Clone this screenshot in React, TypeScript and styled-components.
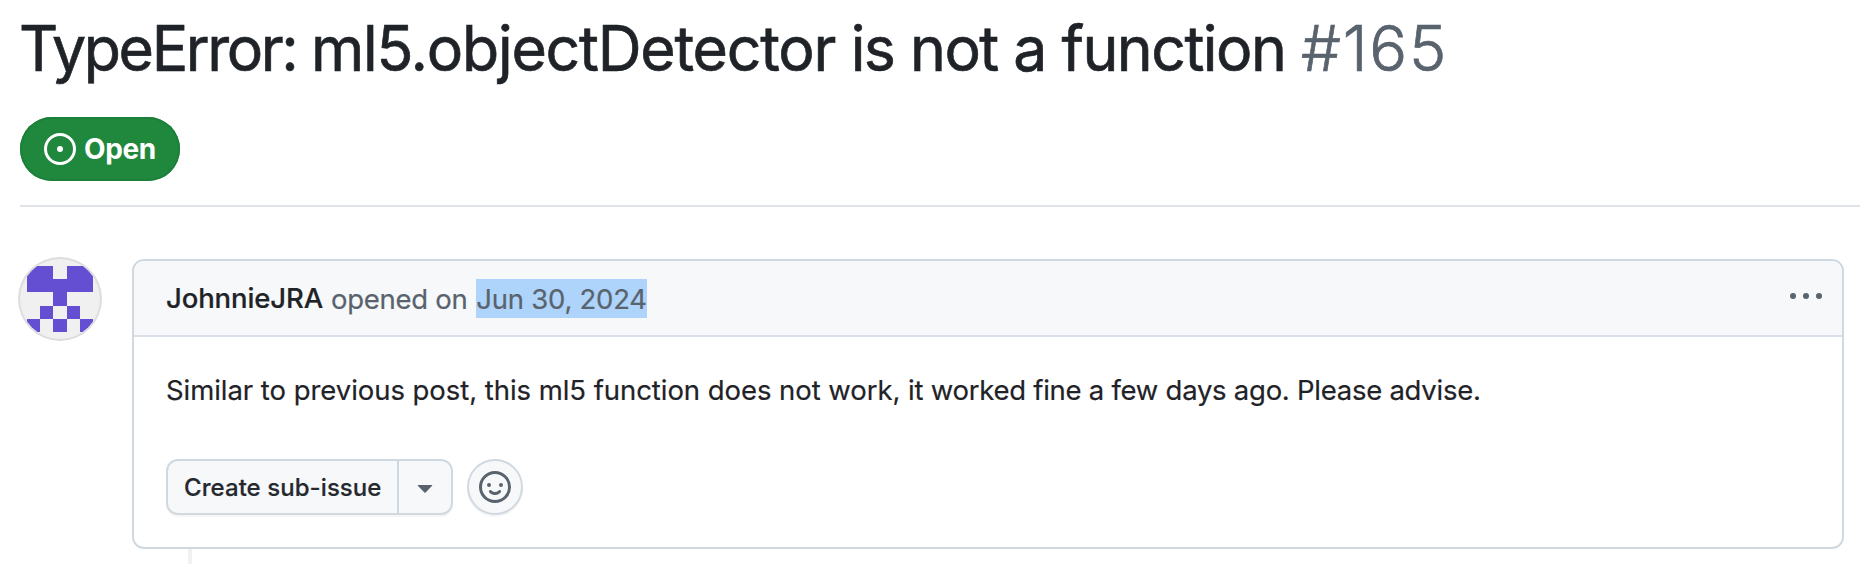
import React from "react";
import styled, { createGlobalStyle } from "styled-components";

const GlobalStyle = createGlobalStyle`
  *, *::before, *::after { box-sizing: border-box; }
  html, body { margin: 0; padding: 0; }
  body {
    background: #ffffff;
    color: #1f2328;
    font-family: Inter, "Liberation Sans", sans-serif;
    overflow: hidden;
    -webkit-font-smoothing: antialiased;
  }
  h1, p { margin: 0; }
  button { font-family: inherit; cursor: pointer; }
`;

const Page = styled.main`
  width: 1860px;
  height: 564px;
  display: flex;
  flex-direction: column;
  overflow: hidden;
`;

const IssueHeader = styled.header`
  display: flex;
  flex-direction: column;
  align-items: flex-start;
  gap: 29px;
  margin-left: 20px;
  padding: 8px 0 24px;
  height: 207px;
  flex: none;
  border-bottom: 2px solid #dfe3e8;
`;

const Title = styled.h1`
  margin-left: -1px;
  font-size: 63px;
  font-weight: 400;
  line-height: 80px;
  white-space: nowrap;
`;

const TitleText = styled.span`
  display: inline-block;
  margin-right: -48px;
  transform: scaleX(0.965);
  transform-origin: left center;
  -webkit-text-stroke: 0.7px currentColor;
`;

const Tracked = styled.span<{ $spacing: number }>`
  letter-spacing: ${(p) => p.$spacing}px;
`;

const IssueNumber = styled.span`
  color: #59636e;
  font-weight: 300;
  letter-spacing: 1.8px;
  -webkit-text-stroke: 0.7px currentColor;
`;

const StateBadge = styled.span`
  display: inline-flex;
  align-items: center;
  gap: 8px;
  width: 160px;
  height: 64px;
  padding-left: 24px;
  border-radius: 32px;
  background: #1f883d;
  box-shadow: inset 0 0 0 2px #1d803a;
  color: #ffffff;
  font-size: 28px;
  font-weight: 700;
  letter-spacing: -0.4px;
  white-space: nowrap;
`;

const Timeline = styled.section`
  display: flex;
  align-items: flex-start;
  gap: 32px;
  padding: 52px 16px 0 20px;
`;

const Avatar = styled.div`
  width: 80px;
  height: 80px;
  flex: none;
  border-radius: 50%;
  overflow: hidden;
  background: #f0f0f0;
  box-shadow: 0 0 0 2px #dddddf;
`;

const Thread = styled.div`
  flex: 1;
  min-width: 0;
`;

const Card = styled.article`
  height: 290px;
  border: 2px solid #d1d9e0;
  border-radius: 12px;
  background: #ffffff;
  overflow: hidden;
`;

const CardHeader = styled.div`
  display: flex;
  align-items: center;
  justify-content: space-between;
  height: 76px;
  padding: 0 20px 0 32px;
  border-bottom: 2px solid #dae0e7;
  background: #f6f8fa;
`;

const Byline = styled.div`
  display: flex;
  align-items: flex-start;
  padding-top: 2px;
  font-size: 27.5px;
  line-height: 39px;
  letter-spacing: -0.3px;
  color: #59636e;
  white-space: nowrap;
  -webkit-text-stroke: 0.2px currentColor;
`;

const Author = styled.span`
  color: #1f2328;
  font-weight: 500;
  line-height: 37px;
  letter-spacing: -0.12px;
  margin-right: 8px;
`;

const OpenedOn = styled.span`
  margin-right: 9px;
`;

const SelectedDate = styled.span`
  height: 39px;
  margin-top: -1px;
  line-height: 41px;
  background: #aed4fb;
  color: #59636e;
  letter-spacing: -0.25px;
`;

const KebabButton = styled.button`
  display: flex;
  padding: 0 0 4px;
  border: 0;
  background: none;
  color: #59636e;
`;

const CardBody = styled.div`
  padding: 32px 32px 0;
`;

const Message = styled.p`
  font-size: 27.5px;
  line-height: 42px;
  white-space: nowrap;
  -webkit-text-stroke: 0.2px currentColor;
`;

const Actions = styled.div`
  display: flex;
  gap: 14px;
  margin-top: 48px;
`;

const ButtonGroup = styled.div`
  display: flex;
  width: 287px;
  height: 56px;
  border: 2px solid #d1d9e0;
  border-radius: 12px;
  background: #f6f8fa;
  box-shadow: 0 2px 0 rgba(31, 35, 40, 0.04);
`;

const SubIssueButton = styled.button`
  width: 231px;
  padding: 0 0 0 16px;
  border: 0;
  border-right: 2px solid #d1d9e0;
  background: none;
  color: #25292e;
  font-size: 24px;
  font-weight: 500;
  letter-spacing: 0.06px;
  text-align: left;
  white-space: nowrap;
  -webkit-text-stroke: 0.2px currentColor;
`;

const CaretButton = styled.button`
  display: flex;
  flex: 1;
  align-items: center;
  justify-content: center;
  padding: 0;
  border: 0;
  background: none;
  color: #59636e;
`;

const ReactionButton = styled.button`
  display: flex;
  align-items: center;
  justify-content: center;
  width: 56px;
  height: 56px;
  padding: 0;
  border: 2px solid #d1d9e0;
  border-radius: 50%;
  background: #f6f8fa;
  box-shadow: 0 2px 0 rgba(31, 35, 40, 0.04);
  color: #59636e;
`;

const TimelineConnector = styled.div`
  width: 4px;
  height: 15px;
  margin-left: 56px;
  background: #f0f1f2;
`;

const IDENTICON = ["11011", "11111", "00100", "01010", "10101"];

const Identicon = () => (
  <svg width="80" height="80" viewBox="0 0 420 420" shapeRendering="crispEdges">
    {IDENTICON.flatMap((row, y) =>
      row.split("").map((cell, x) =>
        cell === "1" ? (
          <rect key={`${x}-${y}`} x={35 + x * 70} y={35 + y * 70} width="70" height="70" fill="#644fd3" />
        ) : null
      )
    )}
  </svg>
);

const OpenIcon = () => (
  <svg width="32" height="32" viewBox="0 0 16 16" fill="currentColor">
    <path d="M8 9.5a1.5 1.5 0 1 0 0-3 1.5 1.5 0 0 0 0 3Z" />
    <path d="M8 0a8 8 0 1 1 0 16A8 8 0 0 1 8 0ZM1.5 8a6.5 6.5 0 1 0 13 0 6.5 6.5 0 0 0-13 0Z" />
  </svg>
);

const KebabIcon = () => (
  <svg width="32" height="32" viewBox="0 0 16 16" fill="currentColor">
    <circle cx="1.5" cy="8" r="1.5" />
    <circle cx="8" cy="8" r="1.5" />
    <circle cx="14.5" cy="8" r="1.5" />
  </svg>
);

const CaretIcon = () => (
  <svg width="32" height="32" viewBox="0 0 16 16" fill="currentColor">
    <path d="m4.427 7.427 3.396 3.396a.25.25 0 0 0 .354 0l3.396-3.396A.25.25 0 0 0 11.396 7H4.604a.25.25 0 0 0-.177.427Z" />
  </svg>
);

const SmileyIcon = () => (
  <svg width="32" height="32" viewBox="0 0 16 16" fill="currentColor">
    <path d="M8 0a8 8 0 1 1 0 16A8 8 0 0 1 8 0ZM1.5 8a6.5 6.5 0 1 0 13 0 6.5 6.5 0 0 0-13 0Zm3.82 1.636a.75.75 0 0 1 1.038.175l.007.009c.103.118.22.222.35.31.264.178.683.37 1.285.37.602 0 1.02-.192 1.285-.371.13-.088.247-.192.35-.31l.007-.008a.75.75 0 0 1 1.222.87l-.022-.015c.02.013.021.015.021.015v.001l-.001.002-.002.003-.005.007-.014.019a2.066 2.066 0 0 1-.184.213c-.16.166-.338.316-.53.445-.63.418-1.37.638-2.127.629-.946 0-1.652-.308-2.126-.63a3.331 3.331 0 0 1-.715-.657l-.014-.02-.005-.006-.002-.003v-.002h-.001l.613-.432-.614.43a.75.75 0 0 1 .183-1.044ZM12 7a1 1 0 1 1-2 0 1 1 0 0 1 2 0ZM5 8a1 1 0 1 1 0-2 1 1 0 0 1 0 2Z" />
  </svg>
);

export default function App() {
  return (
    <>
      <GlobalStyle />
      <Page>
        <IssueHeader>
          <Title>
            <TitleText>
              <Tracked $spacing={-2.5}>TypeError: </Tracked>
              <Tracked $spacing={-1.3}>ml5.objectDetector</Tracked>
              <Tracked $spacing={-1.58}> is not a function</Tracked>
            </TitleText>{" "}
            <IssueNumber>#165</IssueNumber>
          </Title>
          <StateBadge>
            <OpenIcon />
            Open
          </StateBadge>
        </IssueHeader>
        <Timeline>
          <Avatar>
            <Identicon />
          </Avatar>
          <Thread>
            <Card>
              <CardHeader>
                <Byline>
                  <Author>JohnnieJRA</Author>
                  <OpenedOn>opened on</OpenedOn>
                  <SelectedDate>Jun 30, 2024</SelectedDate>
                </Byline>
                <KebabButton aria-label="Issue body actions">
                  <KebabIcon />
                </KebabButton>
              </CardHeader>
              <CardBody>
                <Message>
                  <Tracked $spacing={-0.05}>Similar to previous post, this ml5 function does not work, </Tracked>
                  <Tracked $spacing={-0.26}>it worked fine a few days ago. Please advise.</Tracked>
                </Message>
                <Actions>
                  <ButtonGroup>
                    <SubIssueButton>Create sub-issue</SubIssueButton>
                    <CaretButton aria-label="View more sub-issue options">
                      <CaretIcon />
                    </CaretButton>
                  </ButtonGroup>
                  <ReactionButton aria-label="Add reaction">
                    <SmileyIcon />
                  </ReactionButton>
                </Actions>
              </CardBody>
            </Card>
            <TimelineConnector />
          </Thread>
        </Timeline>
      </Page>
    </>
  );
}
